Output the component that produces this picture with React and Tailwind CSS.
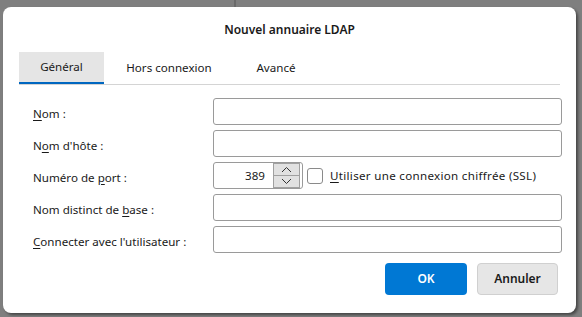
import React from "react";

const font = { fontFamily: '"Noto Sans", "Open Sans", sans-serif' };

const rows = [
  { pre: "", key: "N", post: "om :" },
  { pre: "N", key: "o", post: "m d'hôte :" },
  { pre: "Numéro de ", key: "p", post: "ort :", port: true },
  { pre: "Nom distinct de ", key: "b", post: "ase :" },
  { pre: "", key: "C", post: "onnecter avec l'utilisateur :" },
];

const Chevron = ({ up }) => (
  <svg width="11" height="7" viewBox="0 0 11 7" fill="none">
    <path
      d={up ? "M1 6 L5.5 1.5 L10 6" : "M1 1 L5.5 5.5 L10 1"}
      stroke="#333"
      strokeWidth="1"
    />
  </svg>
);

const Label = ({ row }) => (
  <span className="text-[11.6px] text-[#1a1a1a]">
    {row.pre}
    <span className="underline underline-offset-2">{row.key}</span>
    {row.post}
  </span>
);

export default function App() {
  return (
    <div
      className="relative w-[582px] h-[317px] bg-[#7f7f7f] overflow-hidden pt-[7px] pl-[3px]"
      style={font}
    >
      <div className="absolute left-[234px] top-0 w-[2px] h-[7px] bg-[#6a6a6a]" />
      <div className="w-[573px] h-[306px] bg-white rounded-[8px] shadow-[2px_2px_3px_rgba(0,0,0,0.45)] flex flex-col">
        <div className="h-[45px] flex items-center justify-center pt-[1px] text-[12px] font-semibold text-[#1a1a1a]">
          Nouvel annuaire LDAP
        </div>
        <div className="ml-[16px] mr-[16px] h-[33px] flex border-b border-[#d4d4d4]">
          <div className="w-[85px] bg-[#e5e5e5] border-b-2 border-[#0067c0] flex items-center justify-center text-[11.6px] text-[#1a1a1a]">
            Général
          </div>
          <div className="w-[130px] flex items-center justify-center text-[11.6px] text-[#1a1a1a]">
            Hors connexion
          </div>
          <div className="w-[84px] flex items-center justify-center text-[11.6px] text-[#1a1a1a]">
            Avancé
          </div>
        </div>
        <div className="mt-[13px] flex flex-col gap-[5px] pl-[30px] pr-[14px]">
          {rows.map((row, i) => (
            <div key={i} className="h-[27px] flex items-center">
              <div className="w-[180px]">
                <Label row={row} />
              </div>
              {row.port ? (
                <div className="flex items-center h-full">
                  <div className="w-[90px] h-full border border-[#9a9a9a] rounded-[3px] flex items-center justify-end pr-[2px]">
                    <span className="text-[11.6px] text-[#1a1a1a] mr-[8px]">389</span>
                    <div className="w-[27px] h-[25px] flex flex-col border border-[#a0a0a0]">
                      <div className="flex-1 bg-[#e1e1e1] flex items-center justify-center border-b border-[#a0a0a0]">
                        <Chevron up />
                      </div>
                      <div className="flex-1 bg-[#e1e1e1] flex items-center justify-center">
                        <Chevron />
                      </div>
                    </div>
                  </div>
                  <div className="ml-[4px] w-[16px] h-[16px] border border-[#8a8a8a] rounded-[3px] bg-white" />
                  <span className="ml-[7px] text-[11.6px] tracking-[0.3px] text-[#1a1a1a]">
                    <span className="underline underline-offset-2">U</span>
                    tiliser une connexion chiffrée (SSL)
                  </span>
                </div>
              ) : (
                <div className="flex-1 h-full border border-[#9a9a9a] rounded-[3px]" />
              )}
            </div>
          ))}
        </div>
        <div className="mt-[10px] flex justify-end gap-[10px] pr-[18px]">
          <button className="w-[82px] h-[32px] rounded-[4px] bg-[#0078d4] text-white text-[12px] font-semibold">
            OK
          </button>
          <button className="w-[81px] h-[32px] rounded-[4px] bg-[#e6e6e6] border border-[#d0d0d0] text-[#1a1a1a] text-[12px] font-semibold">
            Annuler
          </button>
        </div>
      </div>
    </div>
  );
}
